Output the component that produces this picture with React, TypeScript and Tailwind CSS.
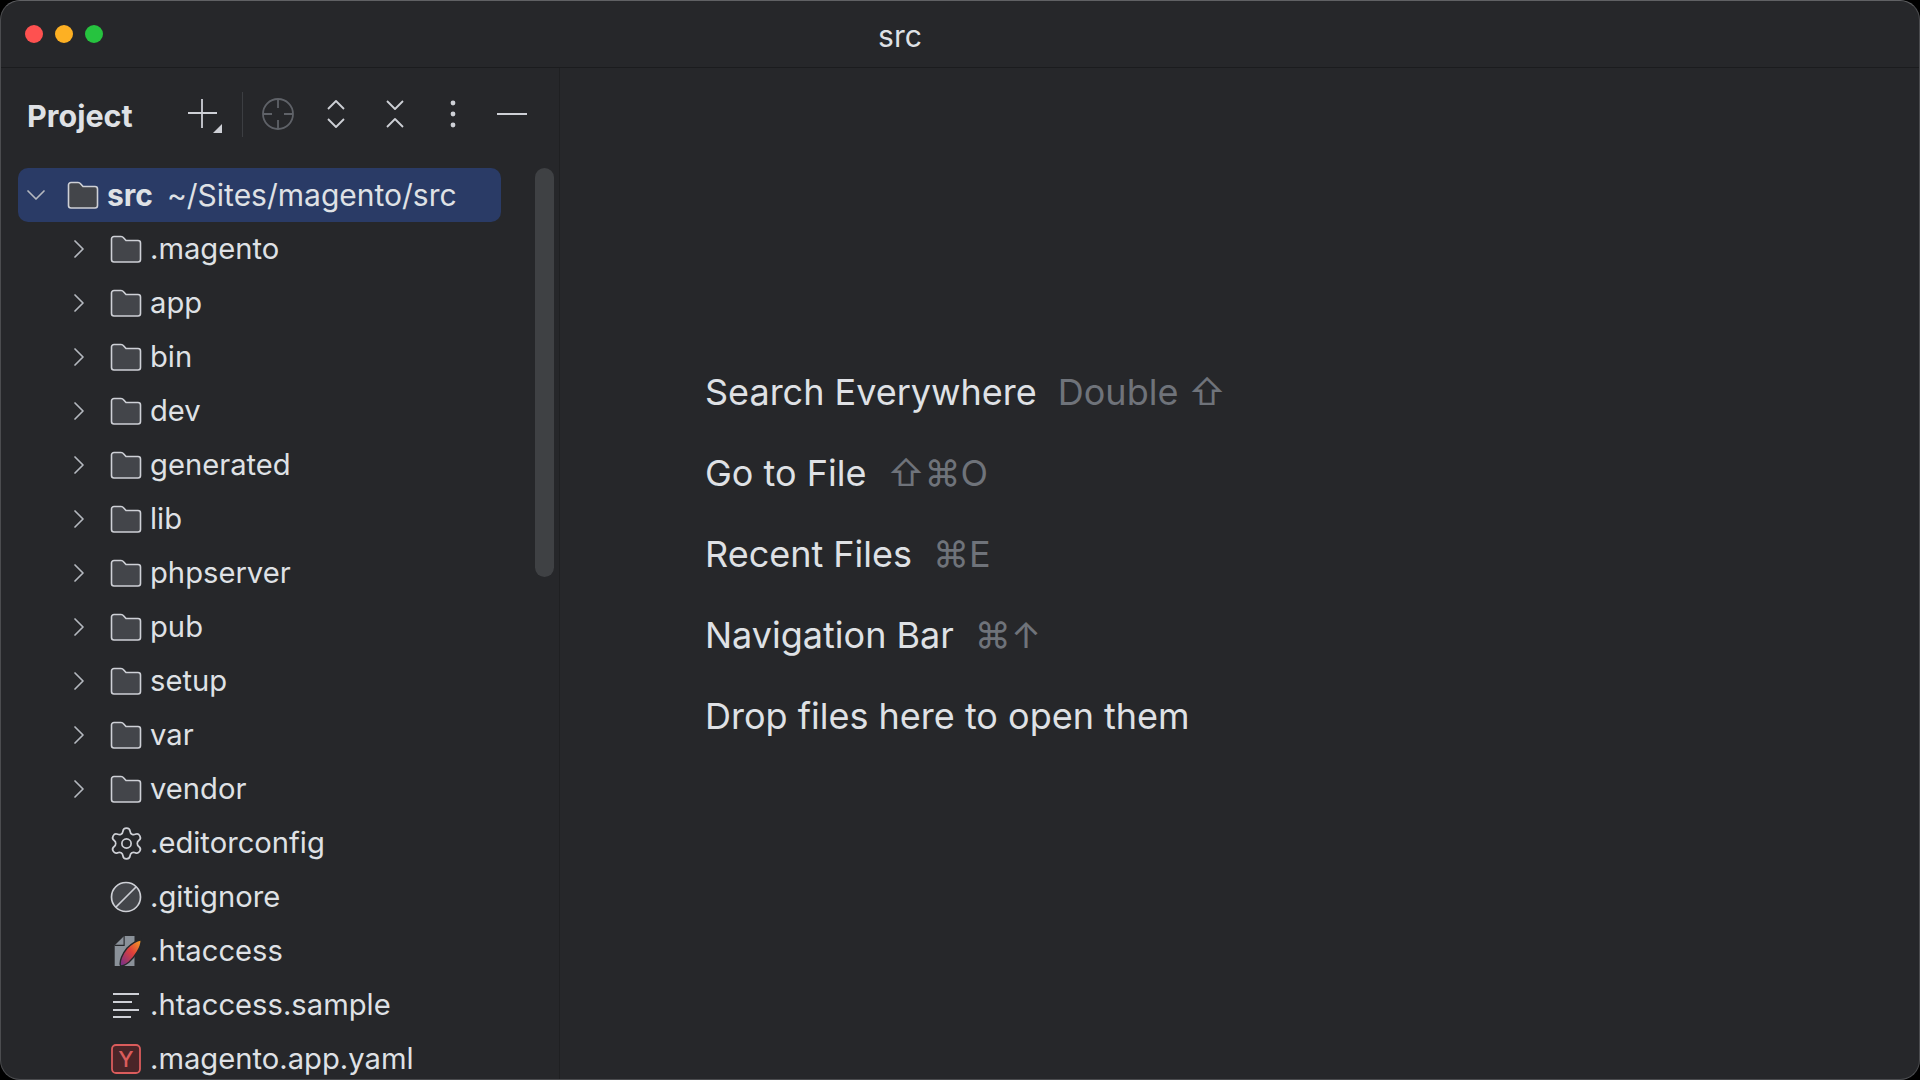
import { Settings } from "lucide-react";

const FOLDERS = [".magento", "app", "bin", "dev", "generated", "lib", "phpserver", "pub", "setup", "var", "vendor"];

function Chevron({ open }: { open?: boolean }) {
  return (
    <svg width="20" height="20" viewBox="0 0 20 20" fill="none" stroke="#b4b8bf" strokeWidth="1.7" strokeLinecap="round" strokeLinejoin="round">
      {open ? <path d="M2 6l8 8 8-8" /> : <path d="M6 2l8 8-8 8" />}
    </svg>
  );
}

function FolderIcon() {
  return (
    <svg width="32" height="28" viewBox="0 0 32 28" fill="#43454a" stroke="#ced0d6" strokeWidth="1.6" strokeLinejoin="round">
      <path d="M1.5 4a2.5 2.5 0 0 1 2.5-2.500h7c1.500 0 2 .5 3 1.700l2 2.300h12a2.500 2.500 0 0 1 2.500 2.500v16.500a2.500 2.500 0 0 1-2.500 2.500h-24a2.500 2.500 0 0 1-2.500-2.500z" />
    </svg>
  );
}

function IgnoreIcon() {
  return (
    <svg width="32" height="32" viewBox="0 0 32 32" fill="#43454a" stroke="#ced0d6" strokeWidth="1.7">
      <circle cx="16" cy="16" r="14.500" />
      <path d="M6 26L26 6" />
    </svg>
  );
}

function ApacheIcon() {
  return (
    <svg width="34" height="34" viewBox="0 0 34 34">
      <defs>
        <linearGradient id="feather" x1="1" y1="0" x2="0" y2="1">
          <stop offset="0" stopColor="#f6a623" />
          <stop offset="0.45" stopColor="#e0403a" />
          <stop offset="1" stopColor="#6d2f8e" />
        </linearGradient>
      </defs>
      <path d="M15 1h11v32H5V11z" fill="#8a9199" />
      <path d="M15 1v10H5" fill="none" stroke="#26272a" strokeWidth="1.200" />
      <path d="M33 5c1 7-7 19-13 24-4 3-8 5-9 3-1-4 2-12 7-18 4-4 10-8 15-9z" fill="url(#feather)" stroke="#26272a" strokeWidth="1.500" />
    </svg>
  );
}

function TextIcon() {
  return (
    <svg width="30" height="28" viewBox="0 0 30 28" stroke="#ced0d6" strokeWidth="2">
      <path d="M2 3h26M2 11h19M2 19h26M2 26h18" />
    </svg>
  );
}

function YamlIcon() {
  return (
    <svg width="30" height="30" viewBox="0 0 30 30" fill="#4a2528" stroke="#db5c5c" strokeWidth="1.800">
      <rect x="1" y="1" width="28" height="28" rx="4" />
      <text x="15" y="23" textAnchor="middle" fontSize="22" fontWeight="500" fill="#db5c5c" stroke="none" fontFamily="Inter, sans-serif">Y</text>
    </svg>
  );
}

function TreeRow({ depth, chevron, icon, children }: { depth: number; chevron?: "open" | "closed"; icon: React.ReactNode; children: React.ReactNode }) {
  return (
    <div className={`flex h-[54px] items-center ${depth === 1 ? "pl-[43px]" : "pl-0"}`}>
      <span className="flex w-[36px] shrink-0 justify-center">{chevron && <Chevron open={chevron === "open"} />}</span>
      <span className="ml-[13px] flex w-[32px] shrink-0 justify-center">{icon}</span>
      <span className="ml-[8px] whitespace-nowrap text-[29.2px] text-[#dfe1e5]">{children}</span>
    </div>
  );
}

function ToolButton({ className, children }: { className?: string; children: React.ReactNode }) {
  return <button className={`flex h-[58px] w-[58px] items-center justify-center ${className ?? ""}`}>{children}</button>;
}

function Toolbar() {
  return (
    <div className="ml-auto mt-[4px] flex items-center">
      <ToolButton>
        <svg width="36" height="36" viewBox="0 0 36 36" stroke="#ced0d6" strokeWidth="1.800" fill="none" className="ml-[5px] mt-[3px]">
          <path d="M15 1v29M1 15h29" />
          <path d="M35 26v9h-9z" fill="#ced0d6" stroke="none" />
        </svg>
      </ToolButton>
      <div className="ml-[11px] mr-[6px] h-[45px] w-px bg-[#3c3e42]" />
      <ToolButton>
        <svg width="32" height="32" viewBox="0 0 32 32" stroke="#5f6268" strokeWidth="1.800" fill="none">
          <circle cx="16" cy="16" r="15" />
          <path d="M16 1v9M16 22v9M1 16h9M22 16h9" />
        </svg>
      </ToolButton>
      <ToolButton>
        <svg width="20" height="30" viewBox="0 0 20 30" stroke="#ced0d6" strokeWidth="1.800" fill="none" strokeLinejoin="round">
          <path d="M2 10l8-8 8 8M2 20l8 8 8-8" />
        </svg>
      </ToolButton>
      <ToolButton className="ml-[1px]">
        <svg width="20" height="30" viewBox="0 0 20 30" stroke="#ced0d6" strokeWidth="1.800" fill="none" strokeLinejoin="round">
          <path d="M2 2l8 8 8-8M2 28l8-8 8 8" />
        </svg>
      </ToolButton>
      <ToolButton>
        <svg width="6" height="28" viewBox="0 0 6 28" fill="#ced0d6">
          <circle cx="3" cy="3" r="2.400" />
          <circle cx="3" cy="14" r="2.400" />
          <circle cx="3" cy="25" r="2.400" />
        </svg>
      </ToolButton>
      <ToolButton className="ml-[1px]">
        <svg width="30" height="4" viewBox="0 0 30 4" stroke="#ced0d6" strokeWidth="2">
          <path d="M0 2h30" />
        </svg>
      </ToolButton>
    </div>
  );
}

function Hint({ label, keys }: { label: string; keys?: string }) {
  return (
    <div className="flex h-[81px] items-center whitespace-nowrap text-[36px]">
      <span className="text-[#dfe1e5]">{label}</span>
      {keys && <span className="ml-[21px] text-[#6f737a]">{keys}</span>}
    </div>
  );
}

export default function App() {
  return (
    <div className="h-screen w-full overflow-hidden bg-black font-[Inter,sans-serif]">
      <div className="flex h-full flex-col overflow-hidden rounded-[20px] border border-[#4b4c4f] border-t-[#606164] bg-[#26272a]">
        <div className="relative flex h-[67px] shrink-0 items-center justify-center border-b border-[#1b1c1e] pr-[120px]">
          <div className="absolute left-[24px] top-[24px] flex gap-[12px]">
            <span className="h-[18px] w-[18px] rounded-full bg-[#fe5150]" />
            <span className="h-[18px] w-[18px] rounded-full bg-[#fdb023]" />
            <span className="h-[18px] w-[18px] rounded-full bg-[#26c33f]" />
          </div>
          <span className="mt-[4px] text-[30px] text-[#dfe1e5]">src</span>
        </div>
        <div className="flex min-h-0 flex-1">
          <aside className="w-[559px] shrink-0 border-r border-[#1f2022]">
            <div className="flex h-[88px] items-center pl-[26px] pr-[18px]">
              <span className="mt-[8px] text-[30.500px] font-bold text-[#dfe1e5]">Project</span>
              <Toolbar />
            </div>
            <div className="mt-[12px] flex pl-[17px]">
              <div className="w-[483px] shrink-0">
                <div className="rounded-[10px] bg-[#2a3b66]">
                  <TreeRow depth={0} chevron="open" icon={<FolderIcon />}>
                    <span className="text-[30px] font-bold">src</span>
                    <span className="ml-[14px] text-[30px]">~/Sites/magento/src</span>
                  </TreeRow>
                </div>
                {FOLDERS.map((name) => (
                  <TreeRow key={name} depth={1} chevron="closed" icon={<FolderIcon />}>
                    {name}
                  </TreeRow>
                ))}
                <TreeRow depth={1} icon={<Settings size={37} strokeWidth={1.1} color="#ced0d6" className="shrink-0" />}>.editorconfig</TreeRow>
                <TreeRow depth={1} icon={<IgnoreIcon />}>.gitignore</TreeRow>
                <TreeRow depth={1} icon={<ApacheIcon />}>.htaccess</TreeRow>
                <TreeRow depth={1} icon={<TextIcon />}>.htaccess.sample</TreeRow>
                <TreeRow depth={1} icon={<YamlIcon />}>.magento.app.yaml</TreeRow>
              </div>
              <div className="ml-[34px] h-[409px] w-[19px] rounded-full bg-[#3f4144]" />
            </div>
          </aside>
          <main className="flex-1 pl-[145px] pt-[283px]">
            <Hint label="Search Everywhere" keys="Double ⇧" />
            <Hint label="Go to File" keys="⇧⌘O" />
            <Hint label="Recent Files" keys="⌘E" />
            <Hint label="Navigation Bar" keys="⌘↑" />
            <Hint label="Drop files here to open them" />
          </main>
        </div>
      </div>
    </div>
  );
}
